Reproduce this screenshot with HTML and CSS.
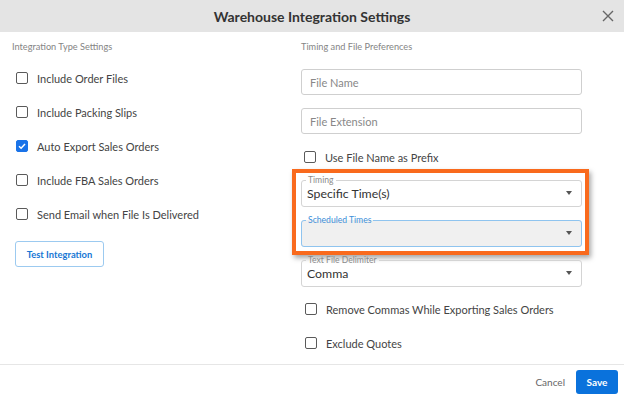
FILE: index.html
```html
<!DOCTYPE html>
<html>
<head>
<meta charset="utf-8">
<link rel="stylesheet" href="styles.css">
</head>
<body>
<div class="dialog">
  <div class="header">
    <div class="title">Warehouse Integration Settings</div>
    <div class="close">
      <svg width="12" height="12" viewBox="0 0 12 12"><path d="M1 1L11 11M11 1L1 11" stroke="#666" stroke-width="1.4" fill="none"/></svg>
    </div>
  </div>
  <div class="body">
    <div class="col left">
      <div class="section">Integration Type Settings</div>
      <div class="rows">
        <label class="check"><span class="box"></span><span>Include Order Files</span></label>
        <label class="check"><span class="box"></span><span>Include Packing Slips</span></label>
        <label class="check"><span class="box on"><svg width="10" height="10" viewBox="0 0 10 10"><path d="M2 5.2L4.1 7.2L8 3" stroke="#fff" stroke-width="1.5" fill="none"/></svg></span><span>Auto Export Sales Orders</span></label>
        <label class="check"><span class="box"></span><span>Include FBA Sales Orders</span></label>
        <label class="check"><span class="box"></span><span>Send Email when File Is Delivered</span></label>
      </div>
      <div class="test">Test Integration</div>
    </div>
    <div class="col right">
      <div class="section">Timing and File Preferences</div>
      <div class="input first">File Name</div>
      <div class="input second">File Extension</div>
      <label class="check prefix"><span class="box"></span><span>Use File Name as Prefix</span></label>
      <div class="highlight-wrap">
        <fieldset class="select timing">
          <legend>Timing</legend>
          <span class="value">Specific Time(s)</span>
          <span class="arrow"></span>
        </fieldset>
        <fieldset class="select sched">
          <legend>Scheduled Times</legend>
          <span class="value"></span>
          <span class="arrow"></span>
        </fieldset>
        <div class="highlight"></div>
      </div>
      <fieldset class="select delim">
        <legend>Text File Delimiter</legend>
        <span class="value">Comma</span>
        <span class="arrow"></span>
      </fieldset>
      <label class="check remove"><span class="box"></span><span>Remove Commas While Exporting Sales Orders</span></label>
      <label class="check"><span class="box"></span><span>Exclude Quotes</span></label>
    </div>
  </div>
  <div class="footer">
    <span class="cancel">Cancel</span>
    <span class="save">Save</span>
  </div>
</div>
</body>
</html>
```
FILE: styles.css
```css
* { box-sizing: border-box; }
html, body { margin: 0; padding: 0; background: #fff; }
body { font-family: Lato, "Noto Sans", sans-serif; color: #444; }
.dialog { width: 624px; height: 399px; display: flex; flex-direction: column; overflow: hidden; }
.header { height: 32px; background: #e4e4e4; display: flex; align-items: center; justify-content: center; position: relative; flex: none; }
.title { font-size: 14px; font-weight: bold; color: #333; }
.close { position: absolute; right: 10px; top: 10px; width: 12px; height: 12px; display: flex; }
.body { flex: 1; display: grid; grid-template-columns: 277px 281px; column-gap: 12px; padding-left: 12px; }
.section { font-size: 9.2px; color: #858585; height: 12px; line-height: 12px; margin-top: 9px; }
.rows { margin-top: 8px; display: flex; flex-direction: column; }
.check { height: 34px; display: flex; align-items: center; font-size: 11px; color: #444; padding-left: 4px; }
.box { width: 12px; height: 12px; border: 1.5px solid #5a5a5a; border-radius: 2px; margin-right: 9px; flex: none; display: flex; align-items: center; justify-content: center; }
.box.on { background: #1a73e8; border-color: #1a73e8; }
.test { margin-top: 10px; margin-left: 3px; width: 89px; height: 26px; border: 1px solid #9ccaf0; border-radius: 3px; color: #1877d4; font-size: 9.4px; font-weight: bold; display: flex; align-items: center; justify-content: center; }
.input { height: 26px; border: 1px solid #cfcfcf; border-radius: 3px; font-size: 11px; color: #888; display: flex; align-items: center; padding-left: 8px; }
.input.first { margin-top: 16px; }
.input.second { margin-top: 13px; }
.check.prefix { margin-top: 6px; padding-left: 3px; }
.highlight-wrap { position: relative; margin-top: 2px; padding-top: 0; }
.select { margin: 0; height: 31px; border: 1px solid #d4d4d4; border-radius: 3px; padding: 0 9px 0 5px; display: flex; align-items: center; position: relative; min-width: 0; }
.select legend { font-size: 8.6px; line-height: 8px; color: #8a8a8a; padding: 0 2px; margin-left: -1px; }
.select .value { font-size: 12.3px; color: #333; flex: 1; margin-top: -4px; }
.select .arrow { width: 0; height: 0; border-left: 3.5px solid transparent; border-right: 3.5px solid transparent; border-top: 4px solid #555; margin-top: -4px; }
.select.timing { margin-top: 0; }
.select.sched { margin-top: 9px; border-color: #8fc4ef; background: #f0f0f0; }
.select.sched legend { color: #3d8fd9; }
.select.delim { margin-top: 9px; }
.check.remove { margin-top: 5px; }
.highlight { position: absolute; left: -9px; top: -7px; width: 297px; height: 86px; border: 4px solid #f96a1d; box-shadow: 2px 3px 5px rgba(0,0,0,0.35); pointer-events: none; }
.footer { height: 35px; border-top: 1px solid #e6e6e6; display: flex; align-items: center; justify-content: flex-end; padding-right: 6px; flex: none; }
.cancel { font-size: 10px; color: #666; margin-right: 11px; }
.save { width: 42px; height: 24px; background: #0a72dc; color: #fff; border-radius: 3px; font-size: 10px; font-weight: bold; display: flex; align-items: center; justify-content: center; }
```
